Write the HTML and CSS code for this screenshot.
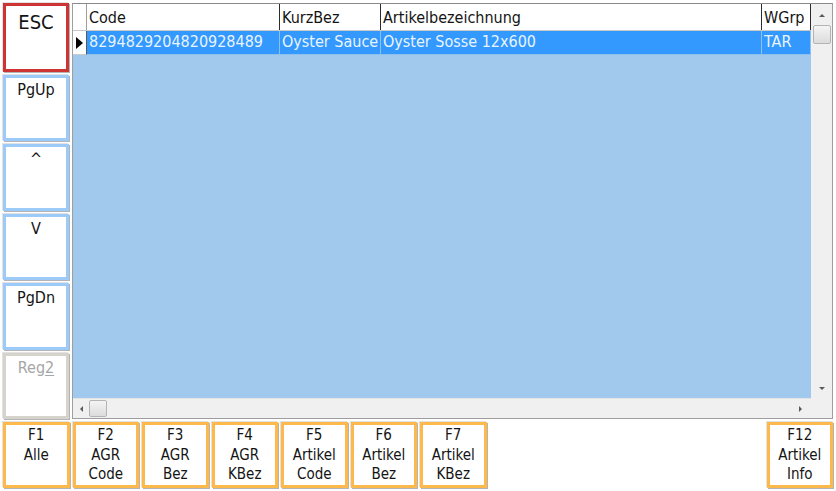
FILE: index.html
```html
<!DOCTYPE html>
<html lang="de">
<head>
<meta charset="utf-8">
<title>Artikelsuche</title>
<link rel="stylesheet" href="styles.css">
</head>
<body>
<div class="screen">
  <div class="main">
    <div class="side">
      <button class="key key-esc"><span class="label">ESC</span></button>
      <button class="key key-nav"><span class="label">PgUp</span></button>
      <button class="key key-nav"><span class="label">^</span></button>
      <button class="key key-nav"><span class="label">V</span></button>
      <button class="key key-nav"><span class="label">PgDn</span></button>
      <button class="key key-off"><span class="label">Reg<u>2</u></span></button>
    </div>
    <div class="grid">
      <div class="grid-inner">
        <div class="grid-data">
          <div class="cols hdr">
            <div class="cell ind"></div>
            <div class="cell">Code</div>
            <div class="cell">KurzBez</div>
            <div class="cell">Artikelbezeichnung</div>
            <div class="cell">WGrp</div>
          </div>
          <div class="cols row sel">
            <div class="cell ind"><span class="cursor"></span></div>
            <div class="cell">8294829204820928489</div>
            <div class="cell">Oyster Sauce</div>
            <div class="cell">Oyster Sosse 12x600</div>
            <div class="cell">TAR</div>
          </div>
          <div class="empty"></div>
          <div class="hscroll">
            <span class="arrow arrow-left"></span>
            <span class="thumb thumb-h"></span>
            <span class="track"></span>
            <span class="arrow arrow-right"></span>
          </div>
        </div>
        <div class="vscroll">
          <span class="arrow arrow-up"></span>
          <span class="thumb thumb-v"></span>
          <span class="track"></span>
          <span class="arrow arrow-down"></span>
          <span class="corner"></span>
        </div>
      </div>
    </div>
  </div>
  <div class="fkeys">
    <button class="key key-fn"><span class="label">F1<br>Alle</span></button>
    <button class="key key-fn"><span class="label">F2<br>AGR<br>Code</span></button>
    <button class="key key-fn"><span class="label">F3<br>AGR<br>Bez</span></button>
    <button class="key key-fn"><span class="label">F4<br>AGR<br>KBez</span></button>
    <button class="key key-fn"><span class="label">F5<br>Artikel<br>Code</span></button>
    <button class="key key-fn"><span class="label">F6<br>Artikel<br>Bez</span></button>
    <button class="key key-fn"><span class="label">F7<br>Artikel<br>KBez</span></button>
    <button class="key key-fn key-last"><span class="label">F12<br>Artikel<br>Info</span></button>
  </div>
</div>
</body>
</html>
```

FILE: styles.css
```css
* {
  box-sizing: border-box;
}

html, body {
  margin: 0;
  background: #ffffff;
}

.screen {
  width: 836px;
  height: 491px;
  padding: 3px 3px 3px 3px;
  display: flex;
  flex-direction: column;
  gap: 3px;
  font-family: "DejaVu Sans Condensed", "DejaVu Sans", sans-serif;
  font-stretch: condensed;
  color: #141414;
}

.main {
  flex: 1;
  display: flex;
  gap: 3px;
  min-height: 0;
}

/* ---------- key buttons ---------- */

.key {
  display: flex;
  flex-direction: column;
  align-items: center;
  justify-content: flex-start;
  margin: 0;
  font: inherit;
  color: inherit;
  background: #ffffff;
  border: 3px solid #9ccbf9;
  box-shadow: 1px 1px 0 #b4b4b4, -1px -1px 0 #e2e2e2;
  border-radius: 0;
  padding: 2px 0 0;
  text-align: center;
  font-size: 16px;
  line-height: 19px;
  white-space: nowrap;
}

.label {
  display: block;
}

.side {
  width: 66px;
  display: flex;
  flex-direction: column;
  gap: 3px;
}

.side .key {
  flex: 1;
  width: 66px;
}

.key-esc {
  border-color: #cf3434;
  font-size: 20px;
  line-height: 24px;
  padding-top: 4px;
}

.key-off {
  border-color: #d6d3cd;
  color: #a6a6a6;
}

.key-off u {
  text-decoration-thickness: 1px;
  text-underline-offset: 2px;
}

.fkeys {
  height: 66px;
  display: flex;
  gap: 3px;
}

.key-fn {
  width: 66.5px;
  border-color: #fdb94c;
  font-size: 15px;
  line-height: 19.5px;
  padding-top: 1px;
}

.key-last {
  margin-left: auto;
}

/* ---------- data grid ---------- */

.grid {
  flex: 1;
  border: 1px solid #9e9e9e;
  border-top-color: #8a8a8a;
  background: #a1c8ed;
  min-width: 0;
}

.grid-inner {
  height: 100%;
  display: flex;
}

.grid-data {
  flex: 1;
  display: flex;
  flex-direction: column;
  min-width: 0;
}

.cols {
  display: grid;
  grid-template-columns: 14px 193px 101px 381px 49px;
  font-size: 16px;
  white-space: nowrap;
}

.cell {
  overflow: hidden;
  padding-left: 2px;
}

.hdr {
  height: 27px;
  background: #ffffff;
  border-bottom: 1px solid #c8c8c8;
  line-height: 27px;
}

.hdr .cell {
  border-right: 1px solid #2c2c2c;
}

.hdr .cell.ind {
  border-right-color: #9e9e9e;
}

.row {
  height: 24px;
  line-height: 22px;
}

.sel .cell {
  background: #3399fe;
  color: #eaf4ff;
  border-right: 1px solid #8ec0ee;
  border-bottom: 1px solid #8ec0ee;
}

.sel .cell.ind {
  background: #ffffff;
  border-right: 1px solid #5a5a5a;
  border-bottom: 1px solid #c8c8c8;
  position: relative;
}

.cursor {
  position: absolute;
  left: 3px;
  top: 6px;
  width: 0;
  height: 0;
  border-top: 6px solid transparent;
  border-bottom: 6px solid transparent;
  border-left: 7px solid #000000;
}

.empty {
  flex: 1;
}

/* ---------- scrollbars ---------- */

.hscroll {
  height: 20px;
  background: #f0f0f0;
  border-top: 1px solid #e4e4e4;
  display: flex;
  align-items: center;
}

.vscroll {
  width: 21px;
  background: #f0f0f0;
  display: flex;
  flex-direction: column;
  align-items: center;
}

.track {
  flex: 1;
}

.arrow {
  width: 0;
  height: 0;
  flex: none;
}

.arrow-left {
  margin: 0 6px 0 7px;
  border-top: 3px solid transparent;
  border-bottom: 3px solid transparent;
  border-right: 3px solid #5a5a5a;
}

.arrow-right {
  margin: 0 9px 0 6px;
  border-top: 3px solid transparent;
  border-bottom: 3px solid transparent;
  border-left: 3px solid #5a5a5a;
}

.arrow-up {
  margin: 10px 0 8px;
  border-left: 3px solid transparent;
  border-right: 3px solid transparent;
  border-bottom: 3px solid #5a5a5a;
}

.arrow-down {
  margin: 8px 0 8px;
  border-left: 3px solid transparent;
  border-right: 3px solid transparent;
  border-top: 3px solid #5a5a5a;
}

.thumb {
  flex: none;
  background: linear-gradient(#f4f4f4, #dcdcdc);
  border: 1px solid #b4b4b4;
  border-radius: 2px;
}

.thumb-h {
  width: 18px;
  height: 17px;
}

.thumb-v {
  width: 18px;
  height: 19px;
}

.corner {
  width: 21px;
  height: 20px;
  background: #f0f0f0;
  flex: none;
}
```
